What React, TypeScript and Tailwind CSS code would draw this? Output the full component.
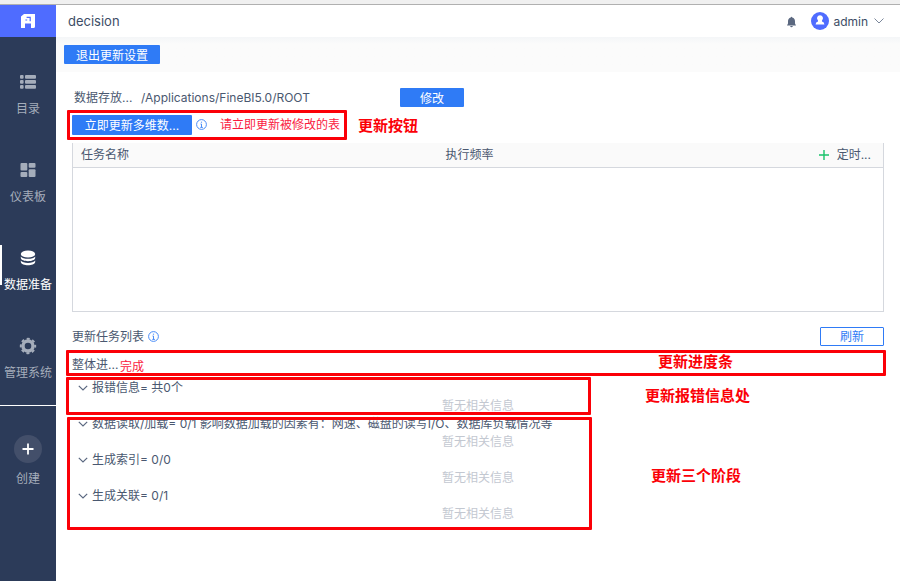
import React from "react";

const btn =
  "flex items-center justify-center rounded-[1px] bg-[#2f7bf6] pt-0.5 text-xs text-white";

function Logo() {
  return (
    <svg width="16" height="16" viewBox="0 0 16 16" aria-hidden="true">
      <path fill="#fff" d="M4 1H15V13.5Q15 15 13.5 15H11V10.5H5V15H1V3.5Z" />
      <path fill="none" stroke="#4f6cff" strokeWidth="1.2" d="M5.4 7H7.2M6.6 4.4H10.2V8.2" />
    </svg>
  );
}

function ListIcon() {
  return (
    <svg width="16" height="16" viewBox="0 0 16 16" fill="currentColor" aria-hidden="true">
      {[1, 6, 11].map((y) => (
        <g key={y}>
          <rect x="0" y={y} width="3.6" height="3.8" rx="1" />
          <rect x="5" y={y} width="11" height="3.8" rx="1" />
        </g>
      ))}
    </svg>
  );
}

function BoardIcon() {
  return (
    <svg width="16" height="16" viewBox="0 0 16 16" fill="currentColor" aria-hidden="true">
      <rect x="0.5" y="1" width="6.8" height="7.6" rx="1" />
      <rect x="8.7" y="1" width="6.8" height="4.8" rx="1" />
      <rect x="0.5" y="10" width="6.8" height="5" rx="1" />
      <rect x="8.7" y="7.2" width="6.8" height="7.8" rx="1" />
    </svg>
  );
}

function DataIcon() {
  return (
    <svg width="16" height="16" viewBox="0 0 16 16" fill="currentColor" aria-hidden="true">
      <ellipse cx="8" cy="4" rx="7.2" ry="3.6" />
      <path d="M0.8 6.4C2.5 9.6 13.5 9.6 15.2 6.4V8C14.5 12.2 1.5 12.2 0.8 8Z" />
      <path d="M0.8 10.6C2.5 13.8 13.5 13.8 15.2 10.6V12C14.5 16.4 1.5 16.4 0.8 12Z" />
    </svg>
  );
}

function GearIcon() {
  return (
    <svg width="18" height="18" viewBox="0 0 18 18" fill="none" stroke="currentColor" aria-hidden="true">
      <circle cx="9" cy="9" r="5" strokeWidth="3.4" />
      <circle cx="9" cy="9" r="7.2" strokeWidth="2" strokeDasharray="3 2.655" strokeDashoffset="1.5" />
    </svg>
  );
}

function InfoIcon() {
  return (
    <svg width="12" height="12" viewBox="0 0 12 12" fill="none" stroke="#4a8df8" aria-hidden="true">
      <circle cx="5.5" cy="5.5" r="4.9" />
      <path d="M4.5 5H5.5V8.4M4.3 8.4H6.9M4.9 3.2H6.1" />
    </svg>
  );
}

function Chevron() {
  return (
    <svg width="10" height="6" viewBox="0 0 10 6" fill="none" stroke="#5b6880" strokeWidth="1.2" aria-hidden="true">
      <path d="M0.8 0.8L5 5L9.2 0.8" />
    </svg>
  );
}

const nav = [
  { label: "目录", icon: <ListIcon />, active: false },
  { label: "仪表板", icon: <BoardIcon />, active: false },
  { label: "数据准备", icon: <DataIcon />, active: true },
  { label: "管理系统", icon: <GearIcon />, active: false },
];

function Sidebar() {
  return (
    <aside className="flex w-14 shrink-0 flex-col bg-[#2c3b59]">
      <a href="#home" aria-label="首页" className="flex h-8 items-center justify-center bg-[#4f6cff]">
        <Logo />
      </a>
      <nav className="flex flex-col gap-12 pt-8">
        {nav.map((n) => (
          <a
            key={n.label}
            href="#nav"
            className={
              "flex h-10 flex-col items-center border-l-2 pt-[5px] " +
              (n.active ? "border-white text-white" : "border-transparent text-[#a5adbb]")
            }
          >
            <span className="-ml-0.5 flex h-4 shrink-0 items-center">{n.icon}</span>
            <span className="-ml-0.5 mt-[11px] whitespace-nowrap leading-4">{n.label}</span>
          </a>
        ))}
      </nav>
      <div className="mt-8 border-t border-white" />
      <button type="button" className="mt-[29px] flex flex-col items-center text-[#a5adbb]">
        <span className="flex size-7 items-center justify-center rounded-full bg-[#434f6a]">
          <svg width="12" height="12" viewBox="0 0 12 12" stroke="#fff" strokeWidth="1.8" aria-hidden="true">
            <path d="M6 0.5V11.5M0.5 6H11.5" />
          </svg>
        </span>
        <span className="mt-2 leading-4">创建</span>
      </button>
    </aside>
  );
}

function Header() {
  return (
    <header className="flex h-8 items-center bg-white pl-3 pr-4 text-[13px]">
      <h1 className="flex-1 pt-0.5 text-[#3d4d66]">decision</h1>
      <button type="button" aria-label="消息" className="mr-3.5 pt-0.5">
        <svg width="11" height="12" viewBox="0 0 11 12" fill="#5b6880" aria-hidden="true">
          <path d="M4.8 1.5a.7.7 0 0 1 1.4 0C8.2 2 9 3.6 9 5.4V7.4L10 9.4H1L2 7.4V5.4C2 3.6 2.8 2 4.8 1.5ZM4.1 10H6.9Q6.5 11.2 5.5 11.2T4.1 10Z" />
        </svg>
      </button>
      <button type="button" className="flex items-center text-xs text-[#3d4d66]">
        <svg width="18" height="18" viewBox="0 0 18 18" aria-hidden="true">
          <circle cx="9" cy="9" r="9" fill="#4f6cff" />
          <path d="M9 3.2a3 3 0 0 1 2 5.2V9.4Q13.4 10 13.4 12.6H4.6Q4.6 10 7 9.4V8.4A3 3 0 0 1 9 3.2Z" fill="#fff" />
        </svg>
        <span className="ml-1 pt-0.5">admin</span>
        <svg className="ml-1.5" width="10" height="6" viewBox="0 0 10 6" fill="none" stroke="#7b879b" aria-hidden="true">
          <path d="M0.5 0.5L5 5L9.5 0.5" />
        </svg>
      </button>
    </header>
  );
}

function Mark({ className }: { className: string }) {
  return <div className={"pointer-events-none absolute rounded-[1px] border-3 border-[#fb0007] " + className} />;
}

function Note({ className, children }: { className: string; children: React.ReactNode }) {
  return (
    <span className={"absolute whitespace-nowrap text-[15px] font-bold leading-5 text-[#fb0007] " + className}>
      {children}
    </span>
  );
}

function Stage({ title }: { title: string }) {
  return (
    <section>
      <button type="button" aria-expanded="true" className="flex h-[18px] items-center gap-1 whitespace-nowrap pl-1.5">
        <Chevron />
        <span>{title}</span>
      </button>
      <p className="h-[18px] text-center leading-[18px] text-[#c3c8d1]">暂无相关信息</p>
    </section>
  );
}

export default function App() {
  return (
    <div className="flex min-h-screen flex-col bg-white font-[Inter,'Noto_Sans_CJK_SC',sans-serif] text-xs text-[#4a5870]">
      <div className="h-[5px] border-b border-[#b0b0b0] bg-[#f0f0f0]" />
      <div className="flex flex-1">
        <Sidebar />
        <div className="min-w-0 flex-1">
          <Header />
          <div className="h-[35px] bg-linear-to-b from-[#f4f6f8] to-[#fbfbfb] to-20% px-2 pt-2">
            <button type="button" className={btn + " h-[19px] w-24"}>退出更新设置</button>
          </div>
          <main className="px-4 pt-4">
            <div className="flex h-[19px] items-center">
              <span className="w-[69px] pl-0.5">数据存放...</span>
              <span className="w-[259px]">/Applications/FineBI5.0/ROOT</span>
              <button type="button" className={btn + " h-[19px] w-16"}>修改</button>
            </div>

            <div className="relative mt-2 flex h-5 items-center">
              <button type="button" className={btn + " h-5 w-[120px]"}>立即更新多维数...</button>
              <span className="ml-1"><InfoIcon /></span>
              <span className="ml-3 text-[#fa1b3f]">请立即更新被修改的表</span>
              <Mark className="-left-[5px] -top-[5px] h-[30px] w-[280px]" />
              <Note className="left-[286px] top-px">更新按钮</Note>
            </div>

            <div className="mt-2 h-[169px] border-x border-b border-[#d5d8de]">
              <table className="w-full table-fixed border-collapse">
                <thead>
                  <tr className="h-6 border-b border-[#d5d8de] bg-[#fafafa] text-left">
                    <th scope="col" className="w-[45%] p-0 pl-2 font-normal">任务名称</th>
                    <th scope="col" className="p-0 pl-2 font-normal">执行频率</th>
                    <th scope="col" className="w-20 p-0 pr-3 font-normal">
                      <button type="button" className="ml-auto flex items-center gap-2 whitespace-nowrap">
                        <svg width="10" height="10" viewBox="0 0 10 10" stroke="#19c36b" aria-hidden="true">
                          <path d="M5 0V10M0 5H10" strokeWidth="1.4" />
                        </svg>
                        定时...
                      </button>
                    </th>
                  </tr>
                </thead>
                <tbody />
              </table>
            </div>

            <div className="mt-[15px] flex h-[19px] items-center">
              <h2>更新任务列表</h2>
              <span className="ml-1"><InfoIcon /></span>
              <button
                type="button"
                className="ml-auto h-[19px] w-16 rounded-[1px] border border-[#2f7bf6] leading-[18px] text-[#2f7bf6]"
              >
                刷新
              </button>
            </div>

            <div className="relative mt-1 flex h-[29px] items-center">
              <span className="w-12">整体进...</span>
              <span className="pt-1 text-[#fa1b3f]">完成</span>
              <Mark className="-left-1.5 -right-0.5 top-0 h-[26px]" />
              <Note className="right-[151px] top-0.5">更新进度条</Note>
            </div>

            <div className="relative">
              <Stage title="报错信息= 共0个" />
              <Mark className="-left-1.5 -top-0.5 h-[38px] w-[525px]" />
              <Note className="left-[573px] top-[7px]">更新报错信息处</Note>
            </div>

            <div className="relative">
              <Stage title="数据读取/加载= 0/1 影响数据加载的因素有：网速、磁盘的读写I/O、数据库负载情况等" />
              <Stage title="生成索引= 0/0" />
              <Stage title="生成关联= 0/1" />
              <Mark className="-left-[5px] top-0.5 h-[113px] w-[525px]" />
              <Note className="left-[579px] top-[51px]">更新三个阶段</Note>
            </div>
          </main>
        </div>
      </div>
    </div>
  );
}
